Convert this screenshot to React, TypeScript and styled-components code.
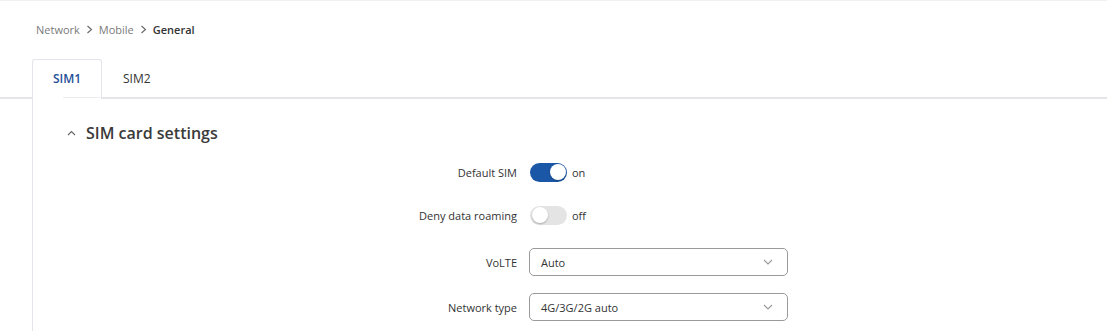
import React from 'react';
import styled, { createGlobalStyle } from 'styled-components';

const GlobalStyle = createGlobalStyle`
  html, body {
    margin: 0;
    padding: 0;
    background: #ffffff;
  }
  body {
    font-family: "Open Sans", "Noto Sans", Arial, sans-serif;
    color: #333;
  }
`;

const Page = styled.div`
  width: 1107px;
  height: 331px;
  overflow: hidden;
  border-top: 1px solid #f1f1f3;
  box-sizing: border-box;
`;

const Breadcrumbs = styled.nav`
  display: flex;
  align-items: center;
  gap: 6px;
  padding: 20px 0 0 36px;
  height: 37px;
  box-sizing: border-box;
  font-size: 11px;
  line-height: 15px;
`;

const Crumb = styled.span<{ $current?: boolean }>`
  color: ${(p) => (p.$current ? '#333' : '#7a7a7a')};
  font-weight: ${(p) => (p.$current ? 600 : 400)};
`;

const Sep = styled.svg`
  width: 7px;
  height: 9px;
  color: #666;
`;

const TabList = styled.div`
  display: flex;
  margin-top: 21px;
  padding-left: 32px;
  border-bottom: 2px solid #e4e4ea;
  height: 38px;
`;

const Tab = styled.div<{ $active?: boolean }>`
  display: flex;
  align-items: center;
  justify-content: center;
  padding: 0 20px;
  height: 38px;
  box-sizing: border-box;
  font-size: 12px;
  font-weight: ${(p) => (p.$active ? 600 : 400)};
  color: ${(p) => (p.$active ? '#1f4f99' : '#333')};
  background: #fff;
  border: 1px solid ${(p) => (p.$active ? '#e4e4ea' : 'transparent')};
  border-bottom: none;
  border-radius: 3px 3px 0 0;
  position: relative;
  width: ${(p) => (p.$active ? '70px' : 'auto')};
  ${(p) =>
    p.$active &&
    `
    height: 40px;
    margin-bottom: -2px;
    padding-bottom: 2px;
    &::after {
      content: '';
      position: absolute;
      left: 30px;
      right: 1px;
      bottom: 1px;
      height: 1px;
      background: #ececf0;
    }
  `}
`;

const Panel = styled.section`
  margin-left: 32px;
  border-left: 1px solid #e4e4ea;
  padding-top: 23px;
  min-height: 240px;
`;

const SectionHeader = styled.div`
  display: flex;
  align-items: center;
  gap: 10px;
  padding-left: 34px;
  height: 22px;
`;

const Title = styled.h2`
  margin: 0;
  font-size: 16px;
  font-weight: 600;
  color: #3a3a3a;
`;

const Form = styled.div`
  display: grid;
  grid-template-columns: 484px 1fr;
  column-gap: 12px;
  margin-top: 7px;
`;

const Label = styled.label<{ $h: number }>`
  display: flex;
  align-items: center;
  justify-content: flex-end;
  height: ${(p) => p.$h}px;
  font-size: 11px;
  color: #333;
`;

const Field = styled.div<{ $h: number }>`
  display: flex;
  align-items: center;
  height: ${(p) => p.$h}px;
  gap: 5px;
`;

const Switch = styled.span<{ $on?: boolean }>`
  position: relative;
  display: inline-block;
  width: 37px;
  height: 19px;
  margin-left: 1px;
  border-radius: 10px;
  background: ${(p) => (p.$on ? '#1b57a7' : '#e4e4e4')};
  &::after {
    content: '';
    position: absolute;
    top: 1.5px;
    left: ${(p) => (p.$on ? '19.5px' : '1.5px')};
    width: 16px;
    height: 16px;
    border-radius: 50%;
    background: #fff;
    box-shadow: 0 1px 2px rgba(0, 0, 0, 0.25);
  }
`;

const SwitchText = styled.span`
  font-size: 11px;
  color: #333;
`;

const Select = styled.div`
  display: flex;
  align-items: center;
  justify-content: space-between;
  width: 259px;
  height: 28px;
  box-sizing: border-box;
  padding: 0 14px 0 11px;
  border: 1px solid #9a9a9a;
  border-radius: 5px;
  font-size: 11px;
  color: #333;
`;

const Chevron = () => (
  <svg width="10" height="6" viewBox="0 0 10 6">
    <path d="M1 1l4 4 4-4" fill="none" stroke="#9a9a9a" strokeWidth="1.1" />
  </svg>
);

const rows = [
  { label: 'Default SIM', kind: 'switch', on: true, h: 42 },
  { label: 'Deny data roaming', kind: 'switch', on: false, h: 44 },
  { label: 'VoLTE', kind: 'select', value: 'Auto', h: 50 },
  { label: 'Network type', kind: 'select', value: '4G/3G/2G auto', h: 40 },
];

const App: React.FC = () => (
  <Page>
    <GlobalStyle />
    <Breadcrumbs>
      <Crumb>Network</Crumb>
      <Sep viewBox="0 0 7 9">
        <path d="M1.5 1l4 3.5-4 3.5" fill="none" stroke="currentColor" strokeWidth="1.1" />
      </Sep>
      <Crumb>Mobile</Crumb>
      <Sep viewBox="0 0 7 9">
        <path d="M1.5 1l4 3.5-4 3.5" fill="none" stroke="currentColor" strokeWidth="1.1" />
      </Sep>
      <Crumb $current>General</Crumb>
    </Breadcrumbs>
    <TabList>
      <Tab $active>SIM1</Tab>
      <Tab>SIM2</Tab>
    </TabList>
    <Panel>
      <SectionHeader>
        <svg width="9" height="6" viewBox="0 0 9 6">
          <path d="M1 5l3.5-3.5L8 5" fill="none" stroke="#666" strokeWidth="1.1" />
        </svg>
        <Title>SIM card settings</Title>
      </SectionHeader>
      <Form>
        {rows.map((r) => (
          <React.Fragment key={r.label}>
            <Label $h={r.h}>{r.label}</Label>
            <Field $h={r.h}>
              {r.kind === 'switch' ? (
                <>
                  <Switch $on={r.on} />
                  <SwitchText>{r.on ? 'on' : 'off'}</SwitchText>
                </>
              ) : (
                <Select>
                  <span>{r.value}</span>
                  <Chevron />
                </Select>
              )}
            </Field>
          </React.Fragment>
        ))}
      </Form>
    </Panel>
  </Page>
);

export default App;
